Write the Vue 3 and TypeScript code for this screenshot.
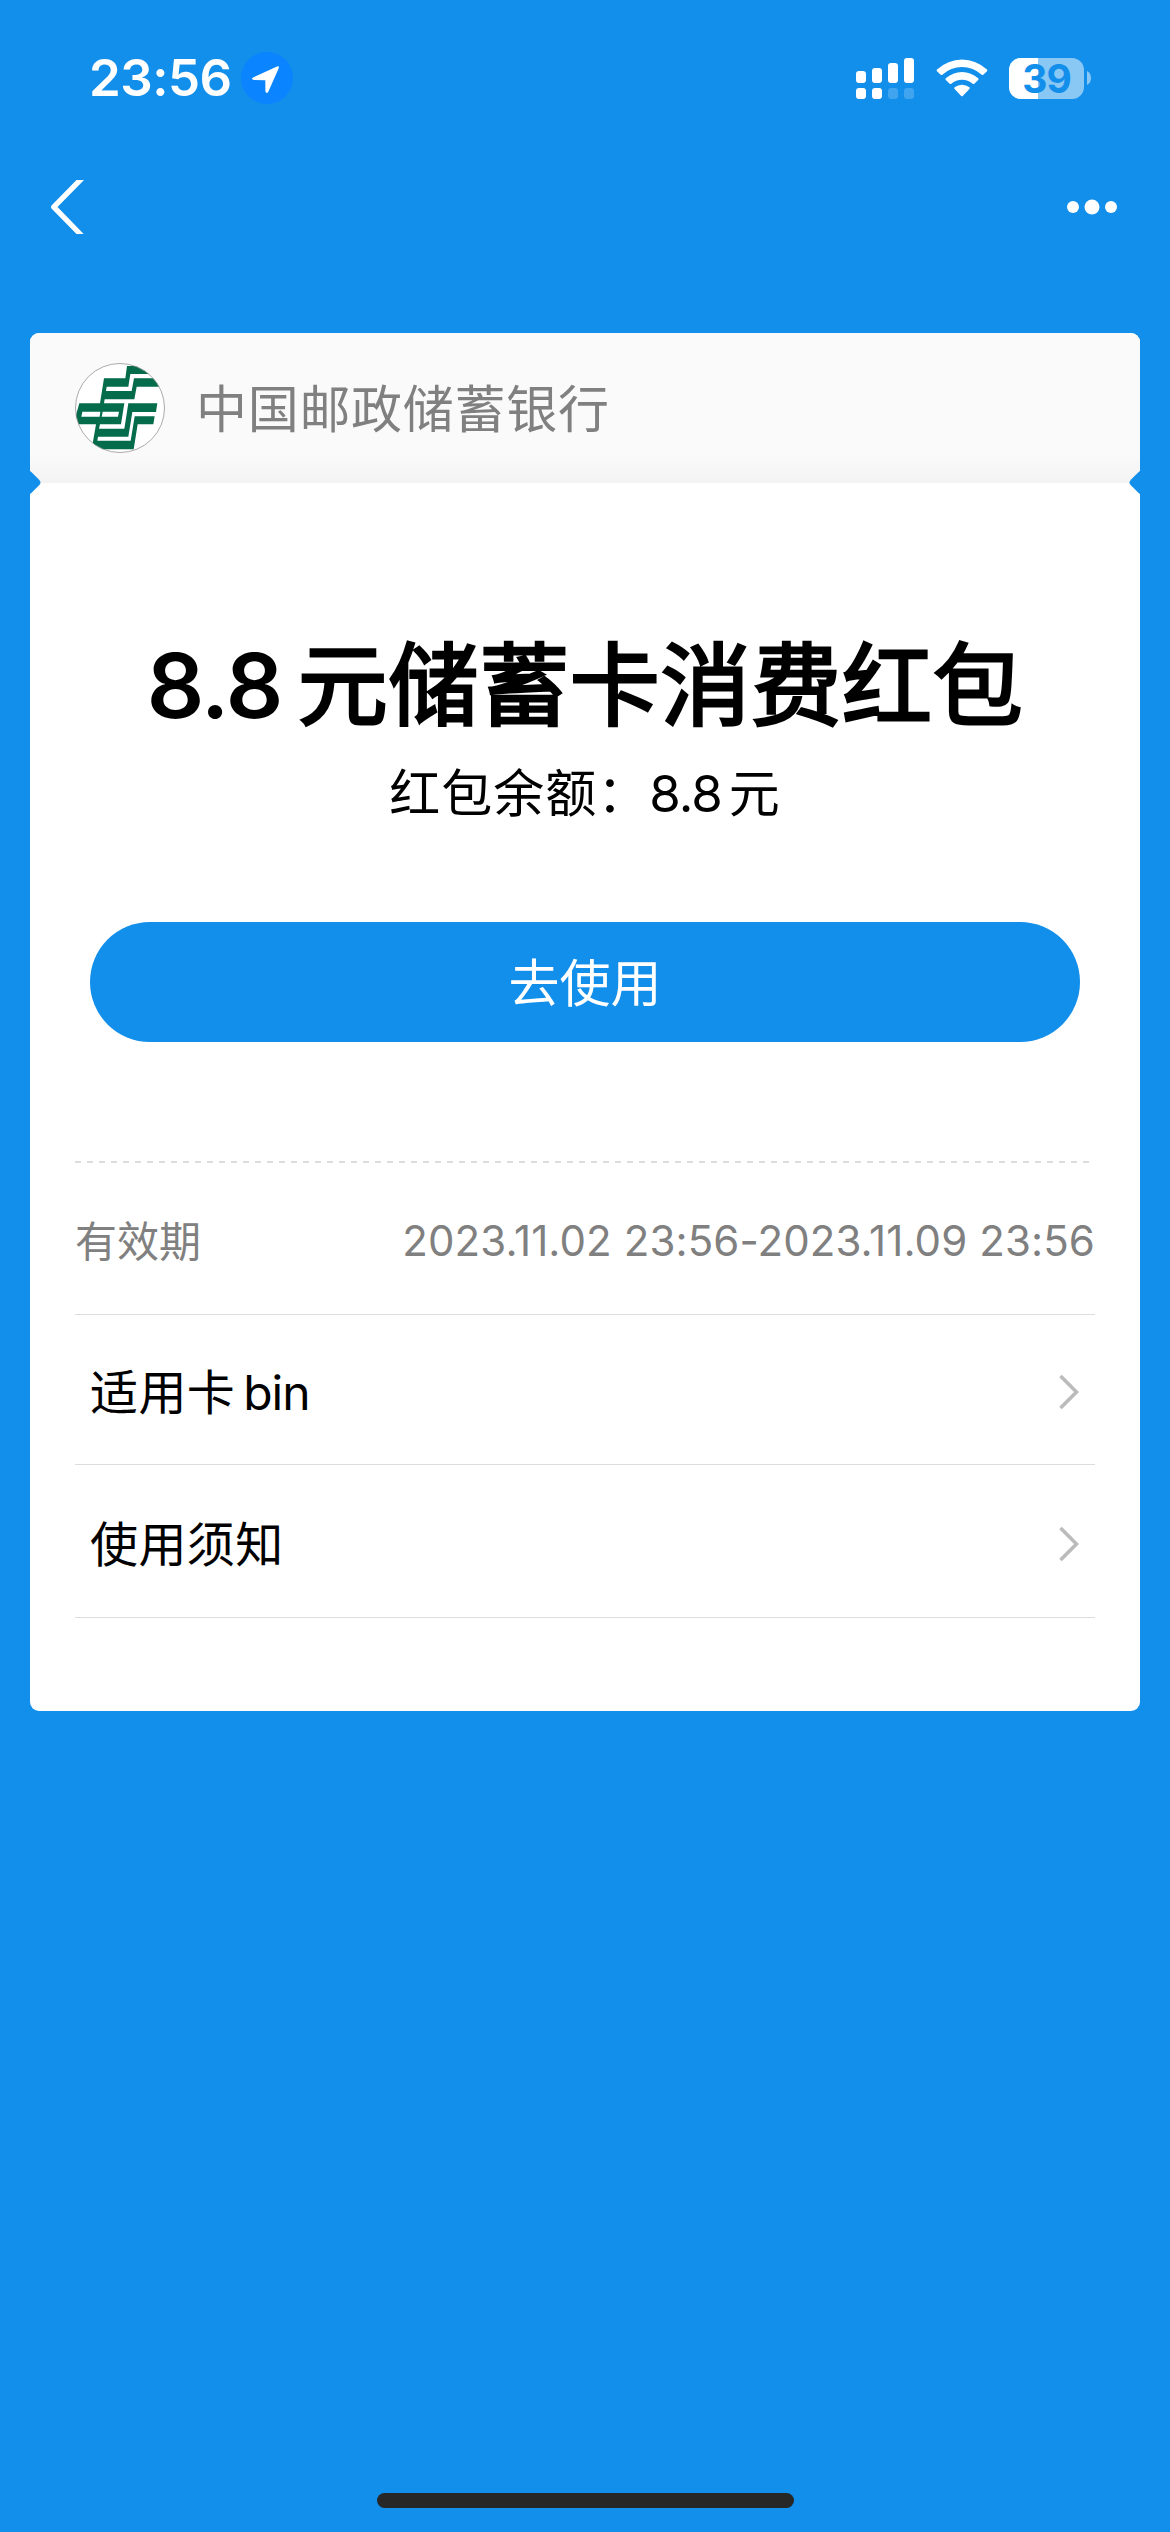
<script setup lang="ts">
interface Entry {
  label: string
  latin?: string
}

const time = '23:56'
const battery = 39

const coupon = {
  bank: '中国邮政储蓄银行',
  amount: '8.8',
  title: '元储蓄卡消费红包',
  balanceLabel: '红包余额：',
  balance: '8.8',
  unit: '元',
  action: '去使用',
  validLabel: '有效期',
  valid: '2023.11.02 23:56-2023.11.09 23:56',
}

const entries: Entry[] = [
  { label: '适用卡', latin: 'bin' },
  { label: '使用须知' },
]
</script>

<template>
  <div class="page">
    <header class="status-bar">
      <div class="status-left">
        <span class="time">{{ time }}</span>
        <svg class="location" viewBox="0 0 52 52">
          <circle cx="26" cy="26" r="26" fill="#0a84ff" />
          <path
            d="M12 25.5 L36 14.6 Q38.6 13.6 37.6 16.4 L27.2 40 Q25 42.4 24.4 39.2 L24.3 28.2 L13.2 28 Q9.6 27.3 12 25.5 Z"
            fill="#fff"
          />
        </svg>
      </div>
      <div class="status-right">
        <svg class="signal" viewBox="0 0 58 41" fill="#fff">
          <rect x="0" y="13" width="10" height="12" rx="3" />
          <rect x="16" y="10" width="10" height="15" rx="3" />
          <rect x="32" y="5" width="10" height="20" rx="3" />
          <rect x="48" y="0" width="10" height="25" rx="3" />
          <rect x="0" y="30" width="10" height="11" rx="3" />
          <rect x="16" y="30" width="10" height="11" rx="3" />
          <rect x="32" y="30" width="10" height="11" rx="3" opacity="0.2" />
          <rect x="48" y="30" width="10" height="11" rx="3" opacity="0.2" />
        </svg>
        <svg class="wifi" viewBox="0 0 52 38" fill="#fff">
          <path d="M1 10.5 A36.5 36.5 0 0 1 51 10.5 Q51.7 11.4 51 12.2 L47.3 15.8 Q46.5 16.4 45.7 15.8 A29 29 0 0 0 6.3 15.8 Q5.5 16.4 4.7 15.8 L1 12.2 Q0.3 11.4 1 10.5 Z" />
          <path d="M9.8 19.3 A24 24 0 0 1 42.2 19.3 Q43 20.2 42.2 21 L38.3 24.7 Q37.5 25.3 36.7 24.7 A16.5 16.5 0 0 0 15.3 24.7 Q14.5 25.3 13.7 24.7 L9.8 21 Q9 20.2 9.8 19.3 Z" />
          <path d="M18.6 28.2 A12 12 0 0 1 33.4 28.2 Q34.2 29 33.4 29.9 L27 36.8 Q26 37.8 25 36.8 L18.6 29.9 Q17.8 29 18.6 28.2 Z" />
        </svg>
        <div class="battery">
          <div class="battery-body">
            <div class="battery-fill" :style="{ width: battery + '%' }"></div>
            <span class="battery-text">{{ battery }}</span>
          </div>
          <svg class="battery-cap" viewBox="0 0 4 14">
            <path d="M0 0 Q4 2 4 7 Q4 12 0 14 Z" fill="#fff" opacity="0.5" />
          </svg>
        </div>
      </div>
    </header>

    <nav class="nav-bar">
      <svg class="back" viewBox="0 0 34 54">
        <path d="M25.5 0 H33 L6.5 27 L32.7 54 H25.5 L0.5 28.5 Q-0.5 27 0.5 25.5 Z" fill="#fff" />
      </svg>
      <svg class="more" viewBox="0 0 50 16" fill="#fff">
        <circle cx="6" cy="8" r="6" />
        <circle cx="25" cy="8" r="7.5" />
        <circle cx="44" cy="8" r="6" />
      </svg>
    </nav>

    <main class="card">
      <span class="notch notch-left"></span>
      <span class="notch notch-right"></span>

      <div class="card-head">
        <svg class="logo" viewBox="165 129 270 270">
          <defs>
            <clipPath id="logo-clip">
              <circle cx="300" cy="264" r="134" />
            </clipPath>
          </defs>
          <circle cx="300" cy="264" r="134" fill="#fff" />
          <g clip-path="url(#logo-clip)" fill="#046b4b">
            <path d="M321 138 H435 V162 H331 L325 200 H260 L258 213 H335 L342 175 H435 V200 H350 L343 238 H254 L252 250 H313 L303 313 H240 L237 326 H313 L325 250 H412 L408 276 H337 L325 350 H234 L232 362 H332 L344 289 H404 L400 313 H353 L341 388 H215 L228 313 H160 L178 250 H240 L252 175 H316 Z" />
            <path d="M187 275 H241 L239 290 H184 Z M248 275 H297 L294 290 H245 Z" fill="#fff" />
          </g>
          <circle cx="300" cy="264" r="133.5" fill="none" stroke="#999" stroke-width="2.5" />
        </svg>
        <span class="bank">{{ coupon.bank }}</span>
      </div>

      <div class="card-main">
        <h1 class="title"><span class="title-num">{{ coupon.amount }}</span>{{ coupon.title }}</h1>
        <p class="balance">{{ coupon.balanceLabel }}<span class="balance-num">{{ coupon.balance }}</span>{{ coupon.unit }}</p>
        <button class="use-btn">{{ coupon.action }}</button>
      </div>

      <div class="detail">
        <div class="dash"></div>
        <div class="valid-row">
          <span class="valid-label">{{ coupon.validLabel }}</span>
          <span class="valid-date">{{ coupon.valid }}</span>
        </div>
        <div v-for="e in entries" :key="e.label" class="entry">
          <span class="entry-label">{{ e.label }}<span v-if="e.latin" class="entry-latin">{{ e.latin }}</span></span>
          <svg class="arrow" viewBox="0 0 20 36">
            <path d="M1.5 2 L17.5 18 L1.5 34" fill="none" stroke="#bbb" stroke-width="3.6" />
          </svg>
        </div>
      </div>
    </main>

    <div class="home-indicator"></div>
  </div>
</template>

<style>
body {
  margin: 0;
  background: #128eeb;
}
</style>

<style scoped>
.page {
  display: flex;
  flex-direction: column;
  width: 1170px;
  height: 2532px;
  box-sizing: border-box;
  background: #128eeb;
  font-family: Inter, "Noto Sans CJK SC", sans-serif;
  color: #000;
}

.status-bar {
  display: flex;
  justify-content: space-between;
  align-items: center;
  height: 156px;
  padding: 0 79px 0 89px;
  box-sizing: border-box;
}

.status-left,
.status-right {
  display: flex;
  align-items: center;
}

.time {
  width: 152px;
  font-size: 51px;
  line-height: 60px;
  font-weight: 600;
  letter-spacing: -0.5px;
  color: #fff;
}

.location {
  width: 52px;
  height: 52px;
}

.signal {
  width: 58px;
  height: 41px;
}

.wifi {
  width: 52px;
  height: 38px;
  margin-left: 22px;
}

.battery {
  display: flex;
  align-items: center;
  gap: 3px;
  margin-left: 21px;
}

.battery-body {
  position: relative;
  width: 75px;
  height: 41px;
  border-radius: 12px;
  background: rgba(255, 255, 255, 0.5);
}

.battery-fill {
  height: 100%;
  border-radius: 12px 0 0 12px;
  background: #fff;
}

.battery-text {
  position: absolute;
  inset: -4px 0;
  font-size: 39px;
  line-height: 49px;
  font-weight: 700;
  text-align: center;
  letter-spacing: -1px;
  color: #128eeb;
}

.battery-cap {
  width: 4px;
  height: 14px;
}

.nav-bar {
  display: flex;
  justify-content: space-between;
  align-items: center;
  height: 102px;
  padding: 0 53px 0 51px;
}

.back {
  width: 34px;
  height: 54px;
}

.more {
  width: 50px;
  height: 16px;
}

.card {
  position: relative;
  height: 1378px;
  margin: 75px 30px 0;
  border-radius: 9px;
  background: #fff;
  overflow: hidden;
}

.notch {
  position: absolute;
  top: 140px;
  width: 19px;
  height: 19px;
  border-radius: 4px;
  background: #128eeb;
  transform: rotate(45deg);
}
.notch-left {
  left: -11px;
}
.notch-right {
  right: -11px;
}

.card-head {
  display: flex;
  align-items: center;
  gap: 31px;
  height: 150px;
  padding: 0 45px;
  background: linear-gradient(#fafafa 0, #fafafa 120px, #f3f3f3 150px);
}

.logo {
  width: 90px;
  height: 90px;
}

.bank {
  padding-top: 3px;
  font-size: 51px;
  line-height: 72px;
  letter-spacing: 0.7px;
  color: #808080;
}

.card-main {
  display: flex;
  flex-direction: column;
  padding: 143px 60px 0;
}

/* regular weight thickened by a stroke, lighter than the bold cut */
.title {
  margin: 0;
  font-size: 90px;
  line-height: 120px;
  font-weight: 400;
  letter-spacing: 0.7px;
  text-align: center;
  white-space: nowrap;
  -webkit-text-stroke: 2.8px #000;
}

.title-num {
  margin-right: 16px;
  font-weight: 600;
  letter-spacing: -1.5px;
  -webkit-text-stroke: 0;
}

.balance {
  margin: 12px 0 92px;
  font-size: 51px;
  line-height: 72px;
  letter-spacing: 1px;
  text-align: center;
}

.balance-num {
  margin-right: 7px;
  letter-spacing: -1px;
}

.use-btn {
  height: 120px;
  padding: 0 0 5px;
  border: none;
  border-radius: 60px;
  background: #128eeb;
  color: #fff;
  font-family: inherit;
  font-size: 51px;
}

.detail {
  padding: 119px 45px 0;
}

.dash {
  height: 2px;
  background: repeating-linear-gradient(90deg, #dcdcdc 0, #dcdcdc 6px, transparent 6px, transparent 12px);
}

.valid-row {
  display: flex;
  justify-content: space-between;
  align-items: center;
  height: 152px;
  padding-top: 3px;
  box-sizing: border-box;
  border-bottom: 1px solid #ddd;
  font-size: 42px;
  color: #808080;
}

.valid-label {
  padding-bottom: 4px;
}

.valid-date {
  letter-spacing: 0.1px;
}

.entry {
  display: flex;
  justify-content: space-between;
  align-items: center;
  height: 150px;
  padding: 4px 16px 0 15px;
  box-sizing: border-box;
  border-bottom: 1px solid #ddd;
  font-size: 48px;
}
.entry + .entry {
  height: 153px;
  padding-top: 6px;
}

.entry-label {
  padding-bottom: 6px;
  letter-spacing: 0.4px;
}

.entry-latin {
  margin-left: 8px;
  letter-spacing: -1px;
}

.arrow {
  width: 20px;
  height: 36px;
}

.home-indicator {
  width: 417px;
  height: 15px;
  margin: auto auto 24px;
  border-radius: 8px;
  background: #272727;
}
</style>
